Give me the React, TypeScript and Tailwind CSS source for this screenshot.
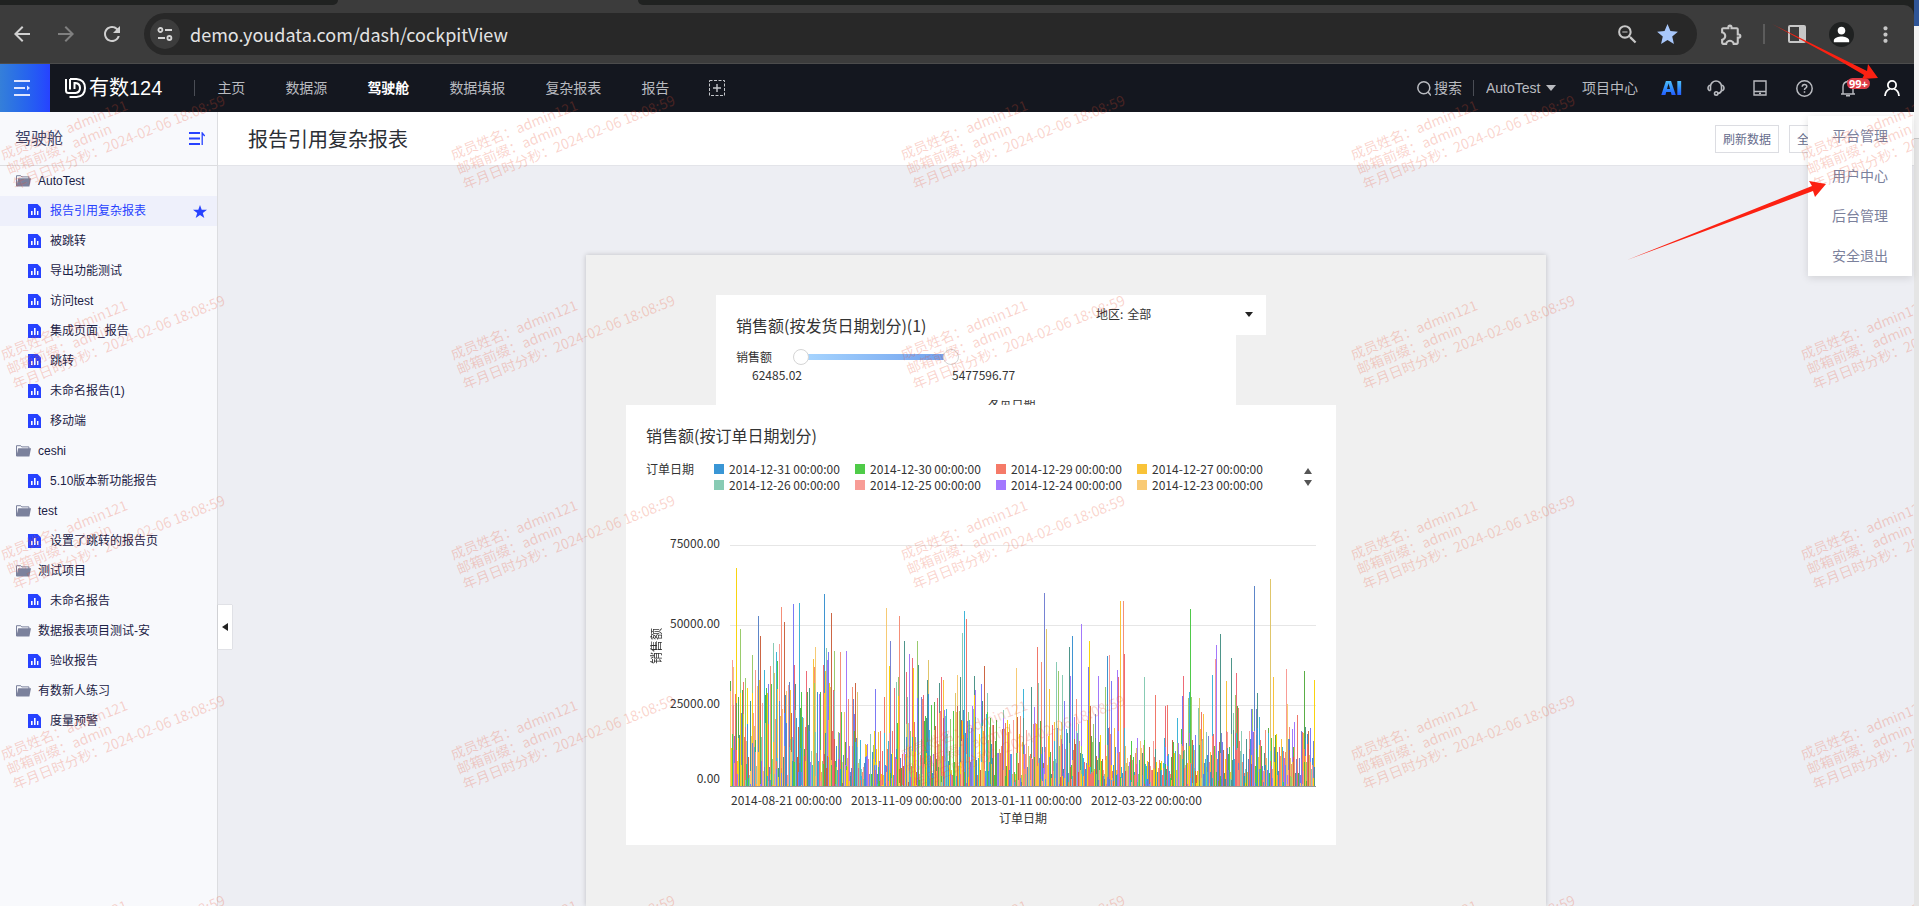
import React, { useState } from 'react';
import {
  MdArrowBack,
  MdArrowForward,
  MdRefresh,
  MdZoomOut,
  MdStar,
  MdOutlineExtension,
  MdPerson,
  MdMoreVert,
} from 'react-icons/md';

const CJK = "font-['Noto_Sans_CJK_SC',sans-serif]";
const UI = "font-['Liberation_Sans','Noto_Sans_CJK_SC',sans-serif]";

interface Folder {
  name: string;
  reports: string[];
}

const FOLDERS: Folder[] = [
  {
    name: 'AutoTest',
    reports: ['报告引用复杂报表', '被跳转', '导出功能测试', '访问test', '集成页面_报告', '跳转', '未命名报告(1)', '移动端'],
  },
  { name: 'ceshi', reports: ['5.10版本新功能报告'] },
  { name: 'test', reports: ['设置了跳转的报告页'] },
  { name: '测试项目', reports: ['未命名报告'] },
  { name: '数据报表项目测试-安', reports: ['验收报告'] },
  { name: '有数新人练习', reports: ['度量预警'] },
];

const NAV = ['主页', '数据源', '驾驶舱', '数据填报', '复杂报表', '报告'];
const USER_MENU = ['平台管理', '用户中心', '后台管理', '安全退出'];

const LEGEND = [
  { label: '2014-12-31 00:00:00', color: 'bg-[#3a96d5]' },
  { label: '2014-12-30 00:00:00', color: 'bg-[#4fcb48]' },
  { label: '2014-12-29 00:00:00', color: 'bg-[#f57a68]' },
  { label: '2014-12-27 00:00:00', color: 'bg-[#f9c338]' },
  { label: '2014-12-26 00:00:00', color: 'bg-[#88cbb4]' },
  { label: '2014-12-25 00:00:00', color: 'bg-[#f89c96]' },
  { label: '2014-12-24 00:00:00', color: 'bg-[#a378ff]' },
  { label: '2014-12-23 00:00:00', color: 'bg-[#f9ca74]' },
];

const X_LABELS = ['2014-08-21 00:00:00', '2013-11-09 00:00:00', '2013-01-11 00:00:00', '2012-03-22 00:00:00'];

const C: Record<string, string> = {
  ye: '#f9d40f', go: '#f9c23c', bl: '#3f94d1', gr: '#4fc94a', re: '#f0786a', te: '#88cbb4', pi: '#f89c96',
  pu: '#a378fb', ta: '#f6ca74', ind: '#7b79f5', cy: '#3fb5d8', dt: '#4e958a', br: '#cc6644', li: '#9acb6d',
  st: '#5d86c9', dg: '#5aae46', cr: '#ee6a76', kh: '#e0c66b', sl: '#7683d3', sa: '#f58f78',
};
const KEYS = Object.keys(C);

// x, height, colour of the tall columns
const PEAKS: [number, number, string][] = [
  [0, 105, 'dg'], [2, 126, 'pi'], [3, 119, 'ta'], [6, 218, 'ye'], [8, 89, 'dg'], [10, 157, 'li'], [12, 96, 'gr'],
  [15, 108, 'li'], [20, 85, 'dt'], [22, 131, 'li'], [25, 116, 'pi'], [28, 170, 'st'], [30, 150, 'br'], [34, 116, 'cy'],
  [38, 102, 'ind'], [40, 120, 'sa'], [43, 143, 'te'], [44, 113, 'kh'], [46, 134, 'cy'], [47, 125, 'gr'], [49, 142, 'pi'],
  [51, 179, 'sa'], [54, 164, 'br'], [56, 95, 'ta'], [60, 96, 'go'], [63, 182, 'ind'], [64, 121, 'cr'], [65, 102, 'dt'],
  [69, 183, 'cy'], [71, 94, 'gr'], [76, 115, 'cr'], [79, 98, 'dt'], [83, 127, 'go'], [84, 119, 'sa'], [85, 139, 'ta'],
  [90, 94, 'dg'], [93, 121, 'cr'], [94, 192, 'bl'], [95, 115, 'go'], [96, 138, 'te'], [97, 126, 'pu'], [98, 134, 'ind'],
  [101, 173, 'br'], [104, 135, 'li'], [110, 134, 'sa'], [116, 135, 'pu'], [122, 99, 'sa'], [125, 103, 'br'], [127, 94, 'kh'],
  [145, 97, 'ind'], [154, 89, 're'], [156, 178, 'ta'], [159, 120, 'ye'], [160, 145, 'sl'], [164, 98, 'cr'], [166, 104, 'te'],
  [168, 109, 'li'], [169, 170, 'sa'], [174, 145, 'dt'], [176, 114, 'cr'], [179, 132, 'pu'], [182, 128, 'cr'], [183, 118, 'ye'],
  [187, 145, 'li'], [188, 121, 'dt'], [197, 106, 'dt'], [198, 126, 'kh'], [209, 103, 'dt'], [211, 109, 'cr'], [213, 106, 'go'],
  [227, 111, 'ta'], [230, 109, 'dt'], [232, 153, 'te'], [234, 175, 'cy'], [236, 167, 're'], [244, 110, 'dt'], [245, 96, 'pu'],
  [251, 102, 'ind'], [254, 120, 'br'], [273, 76, 'te'], [286, 118, 'ta'], [293, 97, 'cy'], [301, 99, 'dt'], [304, 79, 'pu'],
  [307, 139, 're'], [308, 103, 'te'], [311, 124, 'sa'], [314, 193, 'sl'], [316, 157, 'kh'], [319, 97, 'go'], [326, 124, 'te'],
  [328, 115, 'li'], [332, 111, 'te'], [334, 85, 'ind'], [339, 139, 'dt'], [340, 110, 'pu'], [342, 150, 'bl'], [346, 87, 'sa'],
  [351, 162, 'pu'], [358, 119, 'ind'], [359, 145, 'ye'], [360, 80, 'br'], [368, 110, 'pu'], [375, 99, 'li'], [377, 130, 'bl'],
  [379, 131, 'pi'], [381, 105, 'ind'], [387, 116, 'pu'], [388, 109, 'cr'], [390, 185, 'go'], [393, 185, 'sa'], [394, 132, 'cr'],
  [414, 109, 'te'], [425, 91, 're'], [435, 80, 'cr'], [437, 81, 're'], [447, 68, 'cy'], [452, 90, 'ind'], [453, 110, 'cr'],
  [458, 88, 'li'], [459, 94, 'cy'], [460, 177, 'gr'], [461, 89, 'li'], [468, 78, 'te'], [469, 88, 'kh'], [471, 74, 're'],
  [473, 72, 'go'], [482, 111, 'cy'], [485, 127, 'pi'], [486, 141, 'pu'], [490, 152, 'dt'], [496, 105, 'go'], [501, 128, 'dt'],
  [503, 73, 'te'], [505, 91, 'li'], [506, 113, 'cr'], [507, 80, 'dg'], [508, 78, 're'], [521, 77, 'ind'], [522, 77, 'li'],
  [524, 200, 'st'], [526, 77, 'sl'], [527, 93, 'dt'], [529, 69, 'cy'], [538, 58, 'dg'], [540, 207, 'kh'], [543, 109, 'go'],
  [556, 117, 'pi'], [557, 82, 'ta'], [559, 59, 'sa'], [564, 64, 'pu'], [567, 71, 're'], [574, 115, 'dg'], [575, 59, 'dt'],
  [577, 52, 'bl'], [584, 106, 'ye'],
];

const ceilingAt = (x: number) => {
  if (x < 128) return 96;
  if (x < 158) return 48;
  if (x < 258) return 84;
  if (x < 300) return 60;
  if (x < 395) return 62;
  if (x < 450) return 38;
  return 48;
};

// The dense low columns, two layers deep, from a fixed seed so the chart is stable
const buildNoise = () => {
  let seed = 20240206;
  const rnd = () => {
    seed = (seed * 1103515245 + 12345) % 2147483648;
    return seed / 2147483648;
  };
  const bars: [number, number, string][] = [];
  for (let x = 0; x < 585; x++) {
    const h = Math.round(10 + rnd() * ceilingAt(x));
    const k = KEYS[Math.floor(rnd() * KEYS.length)];
    const k2 = KEYS[Math.floor(rnd() * KEYS.length)];
    bars.push([x, h, k]);
    if (rnd() > 0.5) bars.push([x, Math.round(h * rnd() * 0.8), k2]);
  }
  return bars;
};
const NOISE = buildNoise();

const FileIcon = () => (
  <svg width="13" height="14" viewBox="0 0 13 14" aria-hidden="true">
    <path d="M0 0H9.5L13 3.5V14H0Z" fill="#2742ff" />
    <path d="M3 7h1.6v4H3zM6 4h1.6v7H6zM9 7h1.4v4H9z" fill="#fff" />
  </svg>
);

const FolderIcon = () => (
  <svg width="15" height="12" viewBox="0 0 15 12" aria-hidden="true">
    <path d="M.5 11V.7h4.2l1 1.200h7.200V4" fill="none" stroke="#7b819c" />
    <path d="M2.200 3.200H15L13.400 11.500H.4Z" fill="#7b819c" />
  </svg>
);

const BrowserBar = () => {
  const [url, setUrl] = useState('demo.youdata.com/dash/cockpitView');
  const btn = 'flex h-11 w-11 items-center justify-center text-[#c7c7c7]';
  return (
    <div className="bg-[#202221]">
      <div className="flex h-[5px] bg-[#3c3c3c]">
        <div className="w-[338px] rounded-br-[5px] bg-[#202221]" />
        <div className="w-[300px]" />
        <div className="flex-1 rounded-bl-[5px] bg-[#202221]" />
      </div>
      <div className="flex h-[59px] items-center rounded-tr-[10px] border-b border-[#4c4c4c] bg-[#3c3c3c]">
        <button className="flex w-[43px] justify-center text-[#d0d0d0]" aria-label="Back"><MdArrowBack size={24} /></button>
        <button className="flex w-[46px] justify-center text-[#808080]" aria-label="Forward"><MdArrowForward size={24} /></button>
        <button className="flex w-[45px] justify-center text-[#d0d0d0]" aria-label="Reload"><MdRefresh size={24} /></button>
        <div className="ml-2.5 flex h-[42px] flex-1 items-center rounded-full bg-[#282828] pl-1.5 pr-3">
          <button className="flex h-[30px] w-[30px] items-center justify-center rounded-full bg-[#3c3c3c]" aria-label="Site information">
            <svg width="16" height="14" viewBox="0 0 16 14" fill="none" stroke="#d5d5d5" strokeWidth="1.8">
              <circle cx="3.4" cy="3" r="2" />
              <path d="M8 3h7M1 11h7" />
              <circle cx="12.4" cy="11" r="2" />
            </svg>
          </button>
          <input
            aria-label="Address"
            value={url}
            onChange={e => setUrl(e.target.value)}
            className="ml-2.5 min-w-0 flex-1 bg-transparent font-['Noto_Sans_CJK_SC',sans-serif] text-lg leading-6 text-[#e3e3e3] outline-none"
          />
          <button className="flex w-9 justify-center text-[#c7c7c7]" aria-label="Zoom"><MdZoomOut size={25} /></button>
          <button className="ml-1 flex w-9 justify-center text-[#a8c7fa]" aria-label="Bookmark"><MdStar size={25} /></button>
        </div>
        <div className="flex items-center pl-3 pr-[7px]">
          <button className={btn} aria-label="Extensions"><MdOutlineExtension size={25} /></button>
          <span className="mx-2.5 h-5 w-0.5 bg-[#5c5c5c]" />
          <button className={btn} aria-label="Side panel">
            <svg width="18" height="18" viewBox="0 0 18 18">
              <rect x="1" y="1" width="16" height="16" rx="1" fill="none" stroke="#c7c7c7" strokeWidth="2" />
              <path d="M11 1h6v16h-6z" fill="#c7c7c7" />
            </svg>
          </button>
          <button className={btn} aria-label="Profile">
            <span className="flex h-[25px] w-[25px] items-center justify-center rounded-full bg-[#1f2121] text-white"><MdPerson size={23} /></span>
          </button>
          <button className={btn} aria-label="Menu"><MdMoreVert size={25} /></button>
        </div>
      </div>
    </div>
  );
};

const TopNav = () => {
  const slot = 'relative flex h-12 w-11 items-center justify-center text-[#b9bbc0]';
  return (
    <header className={`flex h-12 items-center bg-[#14171f] text-sm text-[#b9bbc0] ${UI}`}>
      <button className="flex h-12 w-[50px] items-center bg-linear-to-r from-[#357fd9] to-[#2742ff] pl-3.5" aria-label="展开菜单">
        <svg width="16" height="16" viewBox="0 0 16 16" fill="none" stroke="#dfe5ff" strokeWidth="1.8">
          <path d="M0 1h16M0 8h11M0 15h16" />
          <path d="M13 5.500l3 2.500-3 2.500z" fill="#dfe5ff" stroke="none" />
        </svg>
      </button>
      <a href="#" className="ml-[15px] flex items-center gap-[3px] text-xl text-white">
        <svg width="21" height="20" viewBox="0 0 21 20" fill="none" stroke="#fff" strokeWidth="2">
          <path d="M1 1v11.500q0 2.500 2.500 2.500H10.500q4.500-.5 4.500-5t-4.500-5H9.500v6" />
          <path d="M5 1v10.500M5 1h6.500q8.500.8 8.500 9t-8.500 9H4.500" />
        </svg>
        <span>有数124</span>
      </a>
      <span className="ml-8 h-4 w-px bg-[#4a4d55]" />
      <nav className="ml-[22px] flex items-center gap-10">
        {NAV.map(item => (
          <a key={item} href="#" className={item === '驾驶舱' ? 'font-bold text-white' : ''}>{item}</a>
        ))}
        <button aria-label="新增">
          <svg width="16" height="16" viewBox="0 0 16 16" fill="none" stroke="#c4c6ca">
            <rect x=".5" y=".5" width="15" height="15" strokeDasharray="3 1.5" />
            <path d="M4 8h8M8 4v8" strokeWidth="1.400" />
          </svg>
        </button>
      </nav>
      <button className="ml-auto flex items-center gap-[3px]">
        <svg width="14" height="15" viewBox="0 0 14 15" fill="none" stroke="#b9bbc0" strokeWidth="1.500">
          <circle cx="6.800" cy="6.800" r="6" />
          <path d="M11 11l3 3.500" />
        </svg>
        搜索
      </button>
      <span className="ml-[11px] h-4 w-px bg-[#4a4d55]" />
      <div className="relative ml-3">
        <select aria-label="项目" className="w-[70px] appearance-none bg-transparent text-sm outline-none">
          <option>AutoTest</option>
        </select>
        <svg width="10" height="6" viewBox="0 0 10 6" className="pointer-events-none absolute right-0 top-[7px]">
          <path d="M0 0h10L5 6z" fill="#b9bbc0" />
        </svg>
      </div>
      <a href="#" className="ml-[26px] mr-3">项目中心</a>
      <button className={slot} aria-label="AI">
        <span className="bg-linear-to-b from-[#5fd0f5] to-[#2a3dff] bg-clip-text font-['Open_Sans',sans-serif] text-xl font-extrabold leading-5 text-transparent">AI</span>
      </button>
      <button className={slot} aria-label="客服">
        <svg width="18" height="16" viewBox="0 0 18 16" fill="none" stroke="#b9bbc0" strokeWidth="1.600">
          <path d="M3.500 10.500V6.500a5.500 5.500 0 0 1 11 0v4" />
          <path d="M3.500 5.500H2.200Q1 6.500 1 8t1.200 2.500h1.300M14.500 5.500h1.300Q17 6.500 17 8t-1.200 2.500h-1.300M14.500 10.500q-.5 2.500-3.800 3" />
          <circle cx="9.200" cy="13.400" r="1.700" />
        </svg>
      </button>
      <button className={slot} aria-label="移动端">
        <svg width="14" height="16" viewBox="0 0 14 16" fill="none" stroke="#b9bbc0" strokeWidth="1.400">
          <path d="M1 1h12v14H1zM1 11.500h12" />
          <path d="M6 13.300h2" />
        </svg>
      </button>
      <button className={slot} aria-label="帮助">
        <svg width="17" height="17" viewBox="0 0 17 17" fill="none" stroke="#b9bbc0" strokeWidth="1.500">
          <circle cx="8.500" cy="8.500" r="7.700" />
          <path d="M6.200 6.800q.1-2.300 2.300-2.300t2.300 2q0 1-1.200 1.700-1.100.6-1.100 1.800M8.500 11.300v1.500" />
        </svg>
      </button>
      <button className={slot} aria-label="通知 99+">
        <svg width="14" height="17" viewBox="0 0 14 17" fill="none" stroke="#b9bbc0" strokeWidth="1.400">
          <path d="M0 14h14M2 14V7q0-5 5-5.500Q12 2 12 7v7M7 0v2M5 15.800h4" />
        </svg>
        <span className="absolute left-[21px] top-[14px] rounded-full bg-[#e03c46] px-0.5 font-['Noto_Sans',sans-serif] text-[11px] font-bold leading-[11px] text-white">99+</span>
      </button>
      <button className={slot} aria-label="用户">
        <svg width="16" height="16" viewBox="0 0 16 16" fill="none" stroke="#fff" strokeWidth="1.800">
          <circle cx="8" cy="5" r="4.100" />
          <path d="M1 16q.3-5.500 5-7M15 16q-.3-5.500-5-7" />
        </svg>
      </button>
    </header>
  );
};

const Sidebar = () => (
  <aside className={`flex w-[218px] shrink-0 flex-col border-r border-[#dcdde0] bg-[#f8f9fc] text-xs text-[#1b2145] ${UI}`}>
    <div className="flex h-[54px] items-center justify-between border-b border-[#dcdde0] pl-[15px] pr-3">
      <h2 className="text-base text-[#3c4468]">驾驶舱</h2>
      <button aria-label="排序">
        <svg width="16" height="13" viewBox="0 0 16 13" fill="none" stroke="#2742ff" strokeWidth="1.800">
          <path d="M0 1h11M0 6.500h11M0 12h11" />
          <path d="M13.200 13V1l2.500 3" strokeWidth="1.300" />
        </svg>
      </button>
    </div>
    <ul>
      {FOLDERS.map(folder => (
        <li key={folder.name}>
          <button className="flex h-[30px] w-full items-center gap-[7px] pl-4"><FolderIcon />{folder.name}</button>
          <ul>
            {folder.reports.map(report => {
              const active = report === '报告引用复杂报表';
              return (
                <li key={report}>
                  <a href="#" className={`flex h-[30px] items-center pl-7 pr-2.5 ${active ? 'bg-[#eef0fb] text-[#2742ff]' : ''}`}>
                    <FileIcon />
                    <span className="ml-[9px] flex-1">{report}</span>
                    {active && (
                      <svg width="14" height="13" viewBox="0 0 14 13" fill="#2742ff">
                        <path d="M7 0l1.700 4.700H14L9.800 7.900 11.300 13 7 10 2.700 13l1.500-5.100L0 4.700h5.300z" />
                      </svg>
                    )}
                  </a>
                </li>
              );
            })}
          </ul>
        </li>
      ))}
    </ul>
  </aside>
);

const thumb =
  '[&::-webkit-slider-thumb]:pointer-events-auto [&::-webkit-slider-thumb]:h-4 [&::-webkit-slider-thumb]:w-4 [&::-webkit-slider-thumb]:appearance-none [&::-webkit-slider-thumb]:rounded-full [&::-webkit-slider-thumb]:border [&::-webkit-slider-thumb]:border-[#d5d5d5] [&::-webkit-slider-thumb]:bg-white';

const ShipCard = () => (
  <section className="absolute left-[130px] top-10 h-[120px] w-[520px] bg-white px-5 pt-[18px]">
    <h3 className="text-base leading-6">销售额(按发货日期划分)(1)</h3>
    <div className="mt-3 flex h-4 items-center">
      <span className="w-[57px] leading-4">销售额</span>
      <div className="relative h-4 w-[166px]">
        <div className="absolute inset-x-2 top-[5px] h-1.5 bg-linear-to-r from-[#a8d6ff] to-[#6f9fec]" />
        <input type="range" aria-label="最小销售额" min={0} max={100} defaultValue={0} className={`pointer-events-none absolute inset-0 h-4 w-full appearance-none bg-transparent ${thumb}`} />
        <input type="range" aria-label="最大销售额" min={0} max={100} defaultValue={100} className={`pointer-events-none absolute inset-0 h-4 w-full appearance-none bg-transparent ${thumb}`} />
      </div>
    </div>
    <div className="mt-0.5 flex pl-4 leading-4">
      <span className="w-[200px]">62485.02</span>
      <span>5477596.77</span>
    </div>
    <div className="mt-[17px] flex h-1.5 items-end justify-center overflow-hidden pl-[71px] leading-[11px]">发货日期</div>
  </section>
);

const OrderCard = () => (
  <section className="absolute left-10 top-[150px] h-[440px] w-[710px] bg-white px-5 pt-[18px] leading-4">
    <h3 className="text-base leading-6">销售额(按订单日期划分)</h3>
    <div className="mt-3.5 flex">
      <span className="w-[68px] shrink-0">订单日期</span>
      <ul className="grid grid-cols-[repeat(4,141px)]">
        {LEGEND.map(item => (
          <li key={item.label} className="flex items-center gap-[5px]">
            <span className={`h-2.5 w-2.5 ${item.color}`} />
            {item.label}
          </li>
        ))}
      </ul>
      <div className="ml-auto flex w-4 shrink-0 flex-col items-center justify-between py-[7px]">
        <button aria-label="上一页"><svg className="block" width="8" height="6" viewBox="0 0 8 6"><path d="M4 0l4 6H0z" fill="#555" /></svg></button>
        <button aria-label="下一页"><svg className="block" width="8" height="6" viewBox="0 0 8 6"><path d="M0 0h8L4 6z" fill="#555" /></svg></button>
      </div>
    </div>
    <div className="mt-[42px] flex">
      <div className="flex w-5 items-center justify-center pb-[68px]">
        <span className="rotate-180 [text-orientation:sideways] [writing-mode:vertical-rl]">销售额</span>
      </div>
      <div className="flex w-[54px] flex-col text-right">
        <span>75000.00</span>
        <span className="mt-16">50000.00</span>
        <span className="mt-16">25000.00</span>
        <span className="mt-[59px]">0.00</span>
      </div>
      <div className="ml-2.5 min-w-0 flex-1 pt-2.5">
        <svg className="block h-[242px] w-full" viewBox="0 0 586 242" preserveAspectRatio="none" shapeRendering="crispEdges">
          <path d="M0 0h586v1H0zM0 80h586v1H0zM0 160h586v1H0z" fill="#e6e6e6" />
          {PEAKS.map(([x, h, c]) => <rect key={x} x={x} y={241 - h} width="1" height={h} fill={C[c]} />)}
          {NOISE.map(([x, h, c], i) => <rect key={i} x={x} y={241 - h} width="1" height={h} fill={C[c]} />)}
          <path d="M0 241h586v1H0z" fill="#999" />
        </svg>
        <div className="mt-[5px] flex">
          {X_LABELS.map(label => <span key={label} className="w-[120px] shrink-0 whitespace-nowrap pl-px">{label}</span>)}
        </div>
        <div className="mt-0.5 text-center">订单日期</div>
      </div>
    </div>
  </section>
);

const Watermark = () => (
  <div aria-hidden="true" className={`pointer-events-none absolute inset-0 grid auto-rows-[200px] grid-cols-[repeat(5,450px)] overflow-hidden text-sm leading-4 text-[#eb5032]/25 ${CJK}`}>
    {Array.from({ length: 25 }, (_, i) => (
      <div key={i} className="pt-[83px]">
        <div className="-ml-0.5 w-max origin-top-left -rotate-[22deg] whitespace-nowrap">
          <div>成员姓名：admin121</div>
          <div>邮箱前缀：admin</div>
          <div>年月日时分秒：2024-02-06 18:08:59</div>
        </div>
      </div>
    ))}
  </div>
);

const App: React.FC = () => (
  <div className="relative flex h-screen overflow-hidden">
    <div className="flex min-w-0 flex-1 flex-col">
      <BrowserBar />
      <div className="relative flex min-h-0 flex-1 flex-col">
        <TopNav />
        <div className="flex min-h-0 flex-1">
          <Sidebar />
          <main className="relative flex min-w-0 flex-1 flex-col bg-[#edeef3]">
            <div className={`flex h-[54px] shrink-0 items-center border-b border-[#e3e4e9] bg-white pl-[30px] ${CJK}`}>
              <h1 className="flex-1 text-xl text-[#2b2f36]">报告引用复杂报表</h1>
              <button className="h-7 w-16 border border-[#dcdde2] text-xs text-[#666c8c]">刷新数据</button>
              <button className="ml-2.5 mr-[61px] h-7 w-16 border border-[#dcdde2] pl-[7px] text-left text-xs text-[#666c8c]">全屏</button>
            </div>
            <div className={`relative mx-auto mt-[89px] w-[960px] flex-1 bg-[#f0f0f0] text-xs text-[#333] shadow-[0_0_5px_rgba(0,0,0,0.2)] ${CJK}`}>
              <ShipCard />
              <div className="absolute left-[500px] top-10 flex h-10 w-[180px] items-center bg-white pb-0.5 pl-2.5">
                <label htmlFor="region">地区:</label>
                <select id="region" className="ml-1 flex-1 appearance-none bg-transparent outline-none">
                  <option>全部</option>
                </select>
                <svg width="8" height="5" viewBox="0 0 8 5" className="pointer-events-none absolute right-[13px]"><path d="M0 0h8L4 5z" fill="#222" /></svg>
              </div>
              <OrderCard />
            </div>
            <button className="absolute left-0 top-[493px] flex h-11 w-3.5 items-center justify-center bg-white shadow-[0_0_1px_rgba(0,0,0,0.3)]" aria-label="收起">
              <svg width="6" height="8" viewBox="0 0 6 8"><path d="M6 0v8L0 4z" fill="#222" /></svg>
            </button>
          </main>
        </div>
        <ul className={`absolute right-0.5 top-[52px] w-[104px] bg-white text-sm text-[#7b819c] shadow-[0_2px_8px_rgba(0,0,0,0.12)] ${CJK}`}>
          {USER_MENU.map(item => (
            <li key={item}><button className="h-10 w-full pb-0.5 pl-6 text-left">{item}</button></li>
          ))}
        </ul>
        <Watermark />
      </div>
    </div>
    <div className="flex w-[5px] shrink-0 flex-col">
      <div className="h-[26px] bg-[#2f5597]" />
      <div className="h-[113px] border-b border-[#c8c8c8] bg-[#f3f3f3]" />
      <div className="flex-1 bg-[#e5e5e5]" />
    </div>
    {/* pointer arrows drawn over the page */}
    <svg className="pointer-events-none absolute right-0 top-0" width="300" height="270" viewBox="1619 0 300 270" fill="#fc2112" aria-hidden="true">
      <path d="M1772 24L1867 71L1868 64L1878 78L1862 79L1864 75L1840 61Z" />
      <path d="M1627 260L1812 186L1809 181L1826 184L1815 197L1813 191Z" />
    </svg>
  </div>
);

export default App;
